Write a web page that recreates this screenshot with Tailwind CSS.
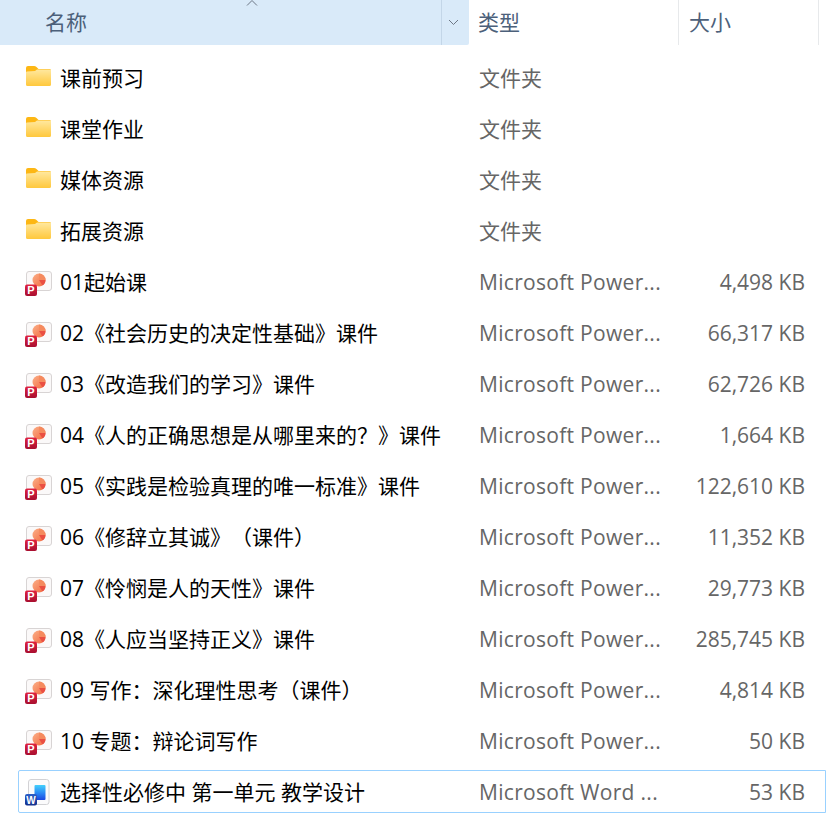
<!DOCTYPE html>
<html>
<head>
<meta charset="utf-8">
<script src="https://cdn.jsdelivr.net/npm/@tailwindcss/browser@4"></script>
</head>
<body class="bg-white overflow-hidden font-['Open_Sans','Noto_Sans_CJK_SC',sans-serif] [text-spacing-trim:space-all]">
<svg width="0" height="0" class="absolute">
  <defs>
    <linearGradient id="fold" x1="0" y1="0" x2="0" y2="1"><stop offset="0" stop-color="#ffe89f"/><stop offset="1" stop-color="#ffc83c"/></linearGradient>
    <linearGradient id="wordg" x1="0" y1="0" x2="0" y2="1"><stop offset="0" stop-color="#42d0fc"/><stop offset="0.55" stop-color="#2a86f4"/><stop offset="1" stop-color="#1a45e0"/></linearGradient>
    <linearGradient id="pptb" x1="0" y1="0" x2="0" y2="1"><stop offset="0" stop-color="#e0223f"/><stop offset="1" stop-color="#a80f30"/></linearGradient>
    <linearGradient id="wordb" x1="0" y1="0" x2="0" y2="1"><stop offset="0" stop-color="#2b5fc8"/><stop offset="1" stop-color="#14308c"/></linearGradient>
    <linearGradient id="pie" x1="0" y1="0" x2="1" y2="1"><stop offset="0" stop-color="#fbb088"/><stop offset="1" stop-color="#f2683f"/></linearGradient>
    <symbol id="folder" viewBox="0 0 28 24">
      <path d="M1 4q0-2 2-2h6q1.500 0 2.500 1l2 2h12v4H1z" fill="#fdb714"/>
      <path d="M1 8.500q0-1 1-1l8-.5 2-1.500h13q1 0 1 1V20.500q0 1.500-1.500 1.500h-22Q1 22 1 20.500z" fill="url(#fold)"/>
    </symbol>
    <symbol id="ppt" viewBox="0 0 28 28">
      <rect x="1.500" y="2.500" width="25" height="19" rx="2.500" fill="#fbf9f9" stroke="#d8d4d4"/>
      <circle cx="14" cy="11" r="6.500" fill="url(#pie)"/>
      <path d="M14 11V4.500a6.500 6.500 0 0 1 6.500 6.500z" fill="#f58a5e"/>
      <path d="M14 11h6.500a6.500 6.500 0 0 1-3 5.500z" fill="#ea4f42"/>
      <rect x="0" y="15.500" width="12" height="11.500" rx="2" fill="url(#pptb)"/>
      <text x="6" y="25" text-anchor="middle" font-size="11" font-weight="700" fill="#fff" font-family="Liberation Sans">P</text>
    </symbol>
    <symbol id="word" viewBox="0 0 28 28">
      <rect x="3.500" y="0.500" width="20.500" height="25" rx="2.500" fill="#fbfbfc" stroke="#d2d2d5"/>
      <rect x="9.500" y="6" width="11" height="15" rx="1" fill="url(#wordg)"/>
      <rect x="0" y="15" width="12" height="11.500" rx="2" fill="url(#wordb)"/>
      <text x="6" y="24.500" text-anchor="middle" font-size="10" font-weight="700" fill="#fff" font-family="Liberation Sans">W</text>
    </symbol>
  </defs>
</svg>

<div class="flex h-[45px] text-[21px] leading-none text-[#4c607a]">
  <div class="relative flex w-[469px] bg-[#d9eaf9] rounded-br-[2px]">
    <div class="flex items-center w-[442px] pl-[45px] border-r-[1.500px] border-[#c3d6e8]">名称</div>
    <svg class="absolute left-[246px] top-0" width="12" height="6" viewBox="0 0 12 6"><path d="M1 5.500L6 0.500l5 5" fill="none" stroke="#6d7785" stroke-width="1"/></svg>
    <svg class="absolute left-[448px] top-[19px]" width="11" height="7" viewBox="0 0 11 7"><path d="M1 1l4.500 4.500L10 1" fill="none" stroke="#6d7785" stroke-width="1"/></svg>
  </div>
  <div class="flex items-center w-[210px] pl-[9px] border-r-[1.500px] border-[#e7e9eb]">类型</div>
  <div class="flex items-center w-[140px] pl-[10px] border-r-[1.500px] border-[#e7e9eb]">大小</div>
</div>

<div class="flex flex-col gap-[8px] pt-[11px] pl-[18px] text-[21px] leading-none">
  <div class="flex items-center h-[43px] pt-[2px] pl-[7px]"><svg class="w-[28px] h-[24px] mb-[5px]"><use href="#folder"/></svg><span class="w-[426px] pl-[7px] text-black">课前预习</span><span class="text-[#666]">文件夹</span></div>
  <div class="flex items-center h-[43px] pt-[2px] pl-[7px]"><svg class="w-[28px] h-[24px] mb-[5px]"><use href="#folder"/></svg><span class="w-[426px] pl-[7px] text-black">课堂作业</span><span class="text-[#666]">文件夹</span></div>
  <div class="flex items-center h-[43px] pt-[2px] pl-[7px]"><svg class="w-[28px] h-[24px] mb-[5px]"><use href="#folder"/></svg><span class="w-[426px] pl-[7px] text-black">媒体资源</span><span class="text-[#666]">文件夹</span></div>
  <div class="flex items-center h-[43px] pt-[2px] pl-[7px]"><svg class="w-[28px] h-[24px] mb-[5px]"><use href="#folder"/></svg><span class="w-[426px] pl-[7px] text-black">拓展资源</span><span class="text-[#666]">文件夹</span></div>
  <div class="flex items-center h-[43px] pt-[2px] pl-[7px]"><svg class="w-[28px] h-[28px]"><use href="#ppt"/></svg><span class="w-[426px] pl-[7px] text-black">01起始课</span><span class="w-[182px] tracking-[0.3px] text-[#666]">Microsoft Power...</span><span class="w-[144px] text-right text-[#666]">4,498 KB</span></div>
  <div class="flex items-center h-[43px] pt-[2px] pl-[7px]"><svg class="w-[28px] h-[28px]"><use href="#ppt"/></svg><span class="w-[426px] pl-[7px] text-black">02《社会历史的决定性基础》课件</span><span class="w-[182px] tracking-[0.3px] text-[#666]">Microsoft Power...</span><span class="w-[144px] text-right text-[#666]">66,317 KB</span></div>
  <div class="flex items-center h-[43px] pt-[2px] pl-[7px]"><svg class="w-[28px] h-[28px]"><use href="#ppt"/></svg><span class="w-[426px] pl-[7px] text-black">03《改造我们的学习》课件</span><span class="w-[182px] tracking-[0.3px] text-[#666]">Microsoft Power...</span><span class="w-[144px] text-right text-[#666]">62,726 KB</span></div>
  <div class="flex items-center h-[43px] pt-[2px] pl-[7px]"><svg class="w-[28px] h-[28px]"><use href="#ppt"/></svg><span class="w-[426px] pl-[7px] text-black">04《人的正确思想是从哪里来的？》课件</span><span class="w-[182px] tracking-[0.3px] text-[#666]">Microsoft Power...</span><span class="w-[144px] text-right text-[#666]">1,664 KB</span></div>
  <div class="flex items-center h-[43px] pt-[2px] pl-[7px]"><svg class="w-[28px] h-[28px]"><use href="#ppt"/></svg><span class="w-[426px] pl-[7px] text-black">05《实践是检验真理的唯一标准》课件</span><span class="w-[182px] tracking-[0.3px] text-[#666]">Microsoft Power...</span><span class="w-[144px] text-right text-[#666]">122,610 KB</span></div>
  <div class="flex items-center h-[43px] pt-[2px] pl-[7px]"><svg class="w-[28px] h-[28px]"><use href="#ppt"/></svg><span class="w-[426px] pl-[7px] text-black">06《修辞立其诚》（课件）</span><span class="w-[182px] tracking-[0.3px] text-[#666]">Microsoft Power...</span><span class="w-[144px] text-right text-[#666]">11,352 KB</span></div>
  <div class="flex items-center h-[43px] pt-[2px] pl-[7px]"><svg class="w-[28px] h-[28px]"><use href="#ppt"/></svg><span class="w-[426px] pl-[7px] text-black">07《怜悯是人的天性》课件</span><span class="w-[182px] tracking-[0.3px] text-[#666]">Microsoft Power...</span><span class="w-[144px] text-right text-[#666]">29,773 KB</span></div>
  <div class="flex items-center h-[43px] pt-[2px] pl-[7px]"><svg class="w-[28px] h-[28px]"><use href="#ppt"/></svg><span class="w-[426px] pl-[7px] text-black">08《人应当坚持正义》课件</span><span class="w-[182px] tracking-[0.3px] text-[#666]">Microsoft Power...</span><span class="w-[144px] text-right text-[#666]">285,745 KB</span></div>
  <div class="flex items-center h-[43px] pt-[2px] pl-[7px]"><svg class="w-[28px] h-[28px]"><use href="#ppt"/></svg><span class="w-[426px] pl-[7px] text-black">09 写作：深化理性思考（课件）</span><span class="w-[182px] tracking-[0.3px] text-[#666]">Microsoft Power...</span><span class="w-[144px] text-right text-[#666]">4,814 KB</span></div>
  <div class="flex items-center h-[43px] pt-[2px] pl-[7px]"><svg class="w-[28px] h-[28px]"><use href="#ppt"/></svg><span class="w-[426px] pl-[7px] text-black">10 专题：辩论词写作</span><span class="w-[182px] tracking-[0.3px] text-[#666]">Microsoft Power...</span><span class="w-[144px] text-right text-[#666]">50 KB</span></div>
  <div class="flex items-center h-[43px] pt-[2px] pl-[6px] border border-[#99d1ff] rounded-l-[2px]"><svg class="w-[28px] h-[28px]"><use href="#word"/></svg><span class="w-[426px] pl-[7px] text-black">选择性必修中 第一单元 教学设计</span><span class="w-[182px] tracking-[0.3px] text-[#666]">Microsoft Word ...</span><span class="w-[144px] text-right text-[#666]">53 KB</span></div>
</div>
</body>
</html>
